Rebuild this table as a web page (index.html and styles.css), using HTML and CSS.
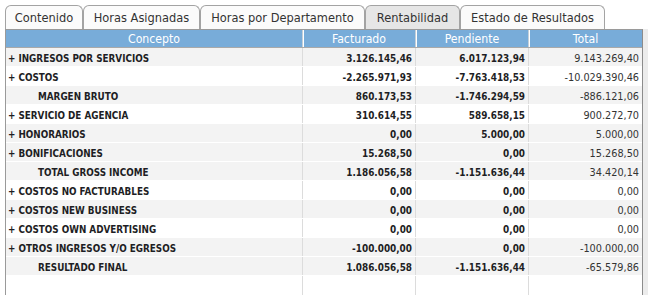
FILE: index.html
```html
<!DOCTYPE html>
<html lang="es">
<head>
<meta charset="utf-8">
<link rel="stylesheet" href="styles.css">
</head>
<body>
<div class="tabs">
  <div class="tab t1">Contenido</div>
  <div class="tab t2">Horas Asignadas</div>
  <div class="tab t3">Horas por Departamento</div>
  <div class="tab t4 active">Rentabilidad</div>
  <div class="tab t5">Estado de Resultados</div>
</div>
<div class="panel">
  <div class="grid">
    <div class="row head">
      <div class="cell">Concepto</div>
      <div class="cell">Facturado</div>
      <div class="cell">Pendiente</div>
      <div class="cell">Total</div>
    </div>
    <div class="row grey"><div class="cell name">+ INGRESOS POR SERVICIOS</div><div class="cell num">3.126.145,46</div><div class="cell num">6.017.123,94</div><div class="cell num total">9.143.269,40</div></div>
    <div class="row"><div class="cell name">+ COSTOS</div><div class="cell num">-2.265.971,93</div><div class="cell num">-7.763.418,53</div><div class="cell num total">-10.029.390,46</div></div>
    <div class="row grey"><div class="cell name sub">MARGEN BRUTO</div><div class="cell num">860.173,53</div><div class="cell num">-1.746.294,59</div><div class="cell num total">-886.121,06</div></div>
    <div class="row"><div class="cell name">+ SERVICIO DE AGENCIA</div><div class="cell num">310.614,55</div><div class="cell num">589.658,15</div><div class="cell num total">900.272,70</div></div>
    <div class="row grey"><div class="cell name">+ HONORARIOS</div><div class="cell num">0,00</div><div class="cell num">5.000,00</div><div class="cell num total">5.000,00</div></div>
    <div class="row grey"><div class="cell name">+ BONIFICACIONES</div><div class="cell num">15.268,50</div><div class="cell num">0,00</div><div class="cell num total">15.268,50</div></div>
    <div class="row grey"><div class="cell name sub">TOTAL GROSS INCOME</div><div class="cell num">1.186.056,58</div><div class="cell num">-1.151.636,44</div><div class="cell num total">34.420,14</div></div>
    <div class="row"><div class="cell name">+ COSTOS NO FACTURABLES</div><div class="cell num">0,00</div><div class="cell num">0,00</div><div class="cell num total">0,00</div></div>
    <div class="row grey"><div class="cell name">+ COSTOS NEW BUSINESS</div><div class="cell num">0,00</div><div class="cell num">0,00</div><div class="cell num total">0,00</div></div>
    <div class="row"><div class="cell name">+ COSTOS OWN ADVERTISING</div><div class="cell num">0,00</div><div class="cell num">0,00</div><div class="cell num total">0,00</div></div>
    <div class="row grey"><div class="cell name">+ OTROS INGRESOS Y/O EGRESOS</div><div class="cell num">-100.000,00</div><div class="cell num">0,00</div><div class="cell num total">-100.000,00</div></div>
    <div class="row grey"><div class="cell name sub">RESULTADO FINAL</div><div class="cell num">1.086.056,58</div><div class="cell num">-1.151.636,44</div><div class="cell num total">-65.579,86</div></div>
    <div class="row filler"><div class="cell"></div><div class="cell"></div><div class="cell"></div><div class="cell"></div></div>
  </div>
  <div class="scroll"></div>
</div>
</body>
</html>
```
FILE: styles.css
```css
* { box-sizing: border-box; }
html, body { margin: 0; padding: 0; background: #fff; }
body {
  width: 648px;
  height: 295px;
  overflow: hidden;
  font-family: "DejaVu Sans Condensed", "DejaVu Sans", sans-serif;
  color: #1e1e24;
}
.tabs {
  display: flex;
  height: 29px;
  padding: 5px 0 0 5px;
}
.tab {
  height: 24px;
  padding-top: 1px;
  border: 1px solid #a3a3a3;
  border-bottom: none;
  border-radius: 6px 6px 0 0;
  background: #fbfbfb;
  color: #333;
  font-size: 12.7px;
  line-height: 22px;
  text-align: center;
  white-space: nowrap;
}
.tab.active { background: #e6e6e6; }
.t1 { width: 78px; }
.t2 { width: 117px; }
.t3 { width: 165px; }
.t4 { width: 95px; }
.t5 { width: 145px; }
.panel {
  display: flex;
  height: 266px;
  margin-left: 5px;
}
.grid {
  width: 638px;
  display: flex;
  flex-direction: column;
  border: 1px solid #9a9a9a;
  border-bottom: none;
  border-right-color: #8c8c8c;
}
.scroll {
  width: 5px;
  background: #ececec;
}
.row {
  display: grid;
  grid-template-columns: 297px 113px 113px 113px;
  height: 19px;
  border-bottom: 1px solid #fff;
  background: #fff;
}
.row.grey { background: #f3f3f3; }
.cell {
  border-right: 1px solid #dcdcdc;
  white-space: nowrap;
  overflow: hidden;
}
.cell:last-child { border-right: none; }
.head {
  height: 18px;
  background: #78acd9;
  border-bottom: 1px solid #a9a9a9;
}
.head .cell {
  color: #fff;
  font-size: 12.2px;
  line-height: 16px;
  padding-top: 1px;
  text-align: center;
  border-right: 1px solid #c4cfd9;
}
.head .cell + .cell { box-shadow: inset 1px 0 #fff; }
.head .cell:last-child { border-right: none; }
.name {
  font-weight: bold;
  font-size: 9.8px;
  line-height: 17px;
  padding-top: 2px;
  padding-left: 2px;
}
.name.sub { padding-left: 32px; }
.num {
  font-weight: bold;
  font-size: 9.9px;
  line-height: 17px;
  padding-top: 2px;
  text-align: right;
  padding-right: 3px;
}
.num.total {
  font-weight: normal;
  font-size: 10.8px;
  color: #333;
  padding-right: 3px;
}
.filler {
  flex: 1;
  height: auto;
  border-bottom: none;
}
```
